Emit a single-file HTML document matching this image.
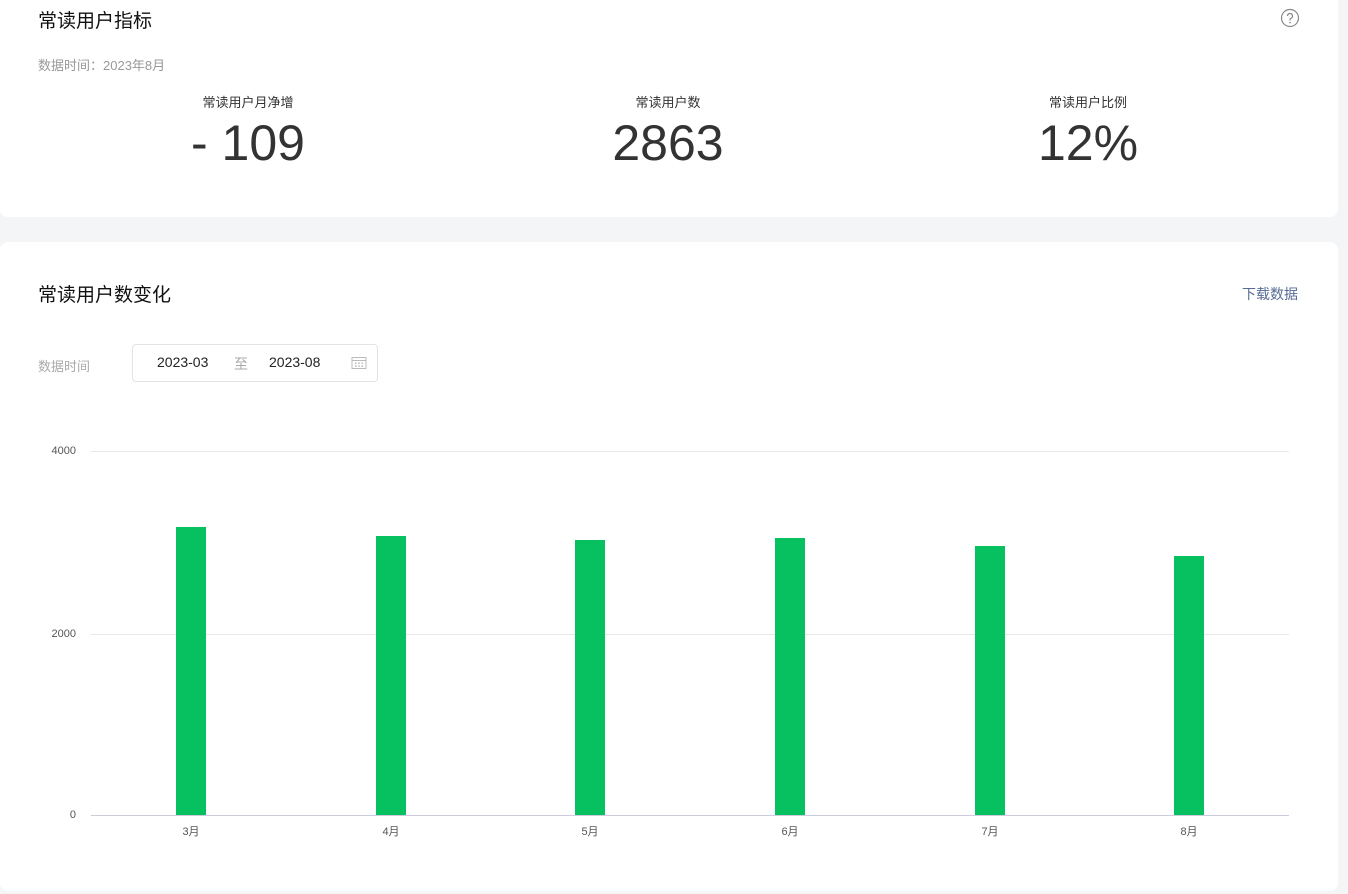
<!DOCTYPE html>
<html><head><meta charset="utf-8"><style>
body{margin:0;width:1348px;height:894px;background:#f4f5f7;font-family:"Liberation Sans","Noto Sans CJK SC",sans-serif;position:relative;overflow:hidden}
.card{position:absolute;left:0;width:1338px;background:#fff;border-radius:0 0 8px 0}
.a{position:absolute;white-space:nowrap}
.grid{position:absolute;left:91px;width:1198px;height:1px;background:#e8e8e8}
.bar{position:absolute;width:30px;background:#07c160;bottom:79px}
.yl{position:absolute;right:1272px;font-size:11px;color:#555}
.xl{position:absolute;top:823px;font-size:11px;color:#555;width:40px;text-align:center}
.big{font-size:50px;color:#333;top:114px}
</style></head><body>
<div class="card" style="top:0;height:217px;border-radius:0 0 8px 8px"></div>
<div class="card" style="top:242px;height:649px;border-radius:8px"></div>
<div class="a" style="left:38px;top:6px;font-size:19px;color:#111">常读用户指标</div>
<svg class="a" style="left:1280px;top:8px" width="20" height="20" viewBox="0 0 20 20"><circle cx="10" cy="10" r="8.5" fill="none" stroke="#888" stroke-width="1.2"/><path d="M7.5 8a2.5 2.5 0 1 1 3.5 2.3c-.7.3-1 .8-1 1.5v.7" fill="none" stroke="#888" stroke-width="1.2"/><circle cx="10" cy="14.6" r=".8" fill="#888"/></svg>
<div class="a" style="left:38px;top:55px;font-size:13px;color:#999">数据时间：2023年8月</div>
<div class="a" style="left:148px;width:200px;text-align:center;top:92px;font-size:13px;color:#333">常读用户月净增</div>
<div class="a big" style="left:148px;width:200px;text-align:center">- 109</div>
<div class="a" style="left:568px;width:200px;text-align:center;top:92px;font-size:13px;color:#333">常读用户数</div>
<div class="a big" style="left:568px;width:200px;text-align:center">2863</div>
<div class="a" style="left:988px;width:200px;text-align:center;top:92px;font-size:13px;color:#333">常读用户比例</div>
<div class="a big" style="left:988px;width:200px;text-align:center">12%</div>
<div class="a" style="left:38px;top:280px;font-size:19px;color:#111">常读用户数变化</div>
<div class="a" style="left:1242px;top:284px;font-size:14px;color:#576b95">下载数据</div>
<div class="a" style="left:38px;top:356px;font-size:13px;color:#aaa">数据时间</div>
<div class="a" style="left:132px;top:344px;width:244px;height:36px;border:1px solid #e3e3e6;border-radius:4px"></div>
<div class="a" style="left:157px;top:354px;font-size:14px;color:#222">2023-03</div>
<div class="a" style="left:234px;top:354px;font-size:14px;color:#aaa">至</div>
<div class="a" style="left:269px;top:354px;font-size:14px;color:#222">2023-08</div>
<svg class="a" style="left:351px;top:356px" width="16" height="14" viewBox="0 0 16 14"><rect x="1" y="1.5" width="14" height="11" fill="none" stroke="#bbb"/><line x1="1" y1="4.5" x2="15" y2="4.5" stroke="#bbb"/><g fill="#bbb"><rect x="4" y="6.5" width="1.5" height="1.5"/><rect x="7.3" y="6.5" width="1.5" height="1.5"/><rect x="10.5" y="6.5" width="1.5" height="1.5"/><rect x="4" y="9.3" width="1.5" height="1.5"/><rect x="7.3" y="9.3" width="1.5" height="1.5"/><rect x="10.5" y="9.3" width="1.5" height="1.5"/></g></svg>
<div class="grid" style="top:451px"></div>
<div class="grid" style="top:634px"></div>
<div class="grid" style="top:815px;background:#ccd"></div>
<div class="yl" style="top:445px">4000</div>
<div class="yl" style="top:628px">2000</div>
<div class="yl" style="top:809px">0</div>
<div class="bar" style="left:176px;top:527px"></div>
<div class="bar" style="left:376px;top:536px"></div>
<div class="bar" style="left:575px;top:540px"></div>
<div class="bar" style="left:775px;top:538px"></div>
<div class="bar" style="left:975px;top:546px"></div>
<div class="bar" style="left:1174px;top:556px"></div>
<div class="xl" style="left:171px">3月</div>
<div class="xl" style="left:371px">4月</div>
<div class="xl" style="left:570px">5月</div>
<div class="xl" style="left:770px">6月</div>
<div class="xl" style="left:970px">7月</div>
<div class="xl" style="left:1169px">8月</div>
</body></html>
